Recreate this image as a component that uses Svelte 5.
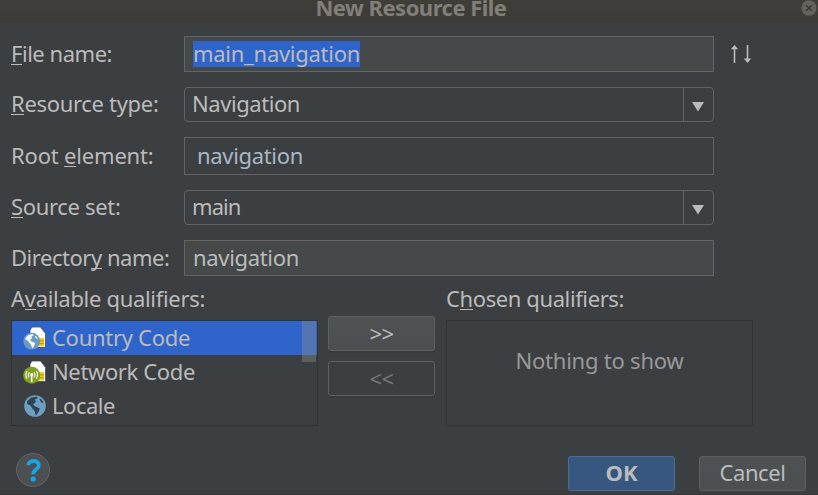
<script>
  // Spreads the letters so that a label takes up the given width.
  function fit(node, width) {
    const range = document.createRange();
    range.selectNodeContents(node);
    const natural = range.getBoundingClientRect().width;
    node.style.letterSpacing = `${(width - natural) / node.textContent.length}px`;
  }

  const fields = [
    { label: ['', 'F', 'ile name:'], lw: 101, kind: 'input filled', value: 'main_navigation', vw: 167, selected: true },
    { label: ['', 'R', 'esource type:'], lw: 147.5, kind: 'combo', value: 'Navigation', vw: 108 },
    { label: ['Root ', 'e', 'lement:'], lw: 142.5, kind: 'input editor', value: 'navigation', vw: 106 },
    { label: ['', 'S', 'ource set:'], lw: 109.5, kind: 'combo', value: 'main', vw: 48.5 },
    { label: ['Director', 'y', ' name:'], lw: 158.5, kind: 'input filled', value: 'navigation', vw: 106 }
  ];
  const qualifiers = [
    { name: 'Country Code', w: 138, icon: 'country' },
    { name: 'Network Code', w: 143, icon: 'network' },
    { name: 'Locale', w: 63, icon: 'locale' }
  ];
</script>

{#snippet mnemonic(parts, width)}
  <span class="text" use:fit={width}>{parts[0]}<span class="key">{parts[1]}</span>{parts[2]}</span>
{/snippet}

{#snippet sim()}
  <path d="M7 4L9 1H17.5L22.5 7.5V21.5H7Z" fill="#fff" stroke="#34496b" stroke-width=".8" />
  <path d="M15 12H21V20.5H13Z" fill="#f5cc16" />
  <path d="M15 14.8H21M15 17.7H21" stroke="#b68b08" fill="none" />
{/snippet}

{#snippet land()}
  <path d="M3 7L7 3L13 1.8L14 3.6L11 5L12.3 7.5L9.2 9.5L10.8 11.5L16.2 14L15 17.5L12 21.5L11 17L8.5 14L6.5 11L3.2 9.5Z" />
  <path d="M15.5 4L18 5L20 8.5L17.5 8Z" />
{/snippet}

<div class="dialog">
  <header>
    <span class="text title" use:fit={191}>New Resource File</span>
    <svg class="close" width="16" height="16" viewBox="0 0 16 16">
      <circle cx="8" cy="8" r="7.7" fill="#65625c" />
      <path d="M5.2 5.2L10.8 10.8M10.8 5.2L5.2 10.8" stroke="#3b3934" stroke-width="1.5" />
    </svg>
  </header>

  <main>
    <section class="form">
      {#each fields as f, i}
        <div class="row r{i}">
          <div class="label">{@render mnemonic(f.label, f.lw)}</div>
          <div class="field {f.kind}">
            <span class="text value" class:selected={f.selected} use:fit={f.vw}>{f.value}</span>
            {#if f.kind === 'combo'}
              <span class="arrow"><svg width="12" height="10" viewBox="0 0 12 10"><path d="M0 0H12L6 9.5Z" fill="#bbb" /></svg></span>
            {/if}
          </div>
          {#if i === 0}
            <svg class="sort" width="22" height="20" viewBox="0 0 22 20">
              <path d="M4.5 19V4M17.5 1V16" stroke="#bbb" stroke-width="1.6" />
              <path d="M4.5 1L8.2 5.2H.8ZM17.5 19L13.8 14.5H21.2Z" fill="#bbb" />
            </svg>
          {/if}
        </div>
      {/each}
    </section>

    <section class="qualifiers">
      <div class="column">
        <div class="heading">{@render mnemonic(['A', 'v', 'ailable qualifiers:'], 194)}</div>
        <div class="box">
          {#each qualifiers as q, i}
            <div class="item" class:active={i === 0}>
              <svg class="icon" width="24" height="24" viewBox="0 0 24 24">
                {#if q.icon === 'country'}
                  {@render sim()}
                  <circle cx="8.7" cy="15.2" r="8.4" fill="#6b9bc3" />
                  <g transform="translate(.2 6.7) scale(.74)" fill="#f4f8fb">{@render land()}</g>
                {:else if q.icon === 'network'}
                  {@render sim()}
                  <circle cx="8.7" cy="15.2" r="8.5" fill="#80a022" />
                  <g fill="none" stroke="#fff" stroke-width="1.1">
                    <path d="M6.2 12.2Q4.6 14.8 6.2 17.4M11.2 12.2Q12.8 14.8 11.2 17.4M4 11Q1.8 14.8 4 18.6M13.4 11Q15.6 14.8 13.4 18.6" />
                    <path d="M8.7 15V22" stroke-width="1.6" />
                  </g>
                  <circle cx="8.7" cy="14.6" r="1.6" fill="#fff" />
                {:else}
                  <circle cx="12" cy="12" r="10.8" fill="#6d9fc5" />
                  <g transform="translate(1 .7) scale(.98)" fill="#2f4352">{@render land()}</g>
                {/if}
              </svg>
              <span class="text lift" use:fit={q.w}>{q.name}</span>
            </div>
          {/each}
          <div class="thumb"></div>
        </div>
      </div>

      <div class="transfer">
        <button><span class="text lift" use:fit={24}>&gt;&gt;</span></button>
        <button class="disabled"><span class="text lift" use:fit={24}>&lt;&lt;</span></button>
      </div>

      <div class="column">
        <div class="heading">{@render mnemonic(['C', 'h', 'osen qualifiers:'], 178)}</div>
        <div class="box empty"><span class="text" use:fit={168}>Nothing to show</span></div>
      </div>
    </section>

    <footer>
      <div class="help">
        <svg width="34" height="34" viewBox="0 0 34 34">
          <circle cx="17" cy="17" r="16.5" fill="#4d5052" stroke="#626567" />
          <path d="M12.4 12.3C12.4 6.7 22.8 6.5 22.8 12.2C22.8 16.3 17.2 16.2 17.2 21.3" fill="none" stroke="#16a5e7" stroke-width="3.8" />
          <circle cx="17.2" cy="26" r="2.6" fill="#00adf5" />
        </svg>
      </div>
      <button class="primary"><span class="text" use:fit={32}>OK</span></button>
      <button><span class="text" use:fit={66}>Cancel</span></button>
    </footer>
  </main>
</div>

<style>
  .dialog {
    width: 818px;
    height: 495px;
    box-sizing: border-box;
    background: #3c3f41;
    color: #bbb;
    font: 22px/26px 'Noto Sans', 'Open Sans', sans-serif;
    border-bottom: 1px solid #353739;
  }
  .text { white-space: pre; }
  .key { border-bottom: 1px solid #bbb; display: inline-block; height: 25px; box-sizing: border-box; line-height: 26px; vertical-align: top; }
  header {
    height: 23px;
    display: flex;
    justify-content: center;
    position: relative;
    background: linear-gradient(#403e39, #3c3b37);
    color: #827f78;
    font-weight: 700;
    line-height: 14px;
  }
  .title { margin-left: 4px; }
  .close { position: absolute; right: 1px; top: 0; }
  main { padding: 13px 12px 0 11px; }
  .form { display: flex; flex-direction: column; }
  .row { display: flex; align-items: center; }
  .r0 { height: 36px; }
  .r1 { height: 35px; margin-top: 15px; }
  .r2 { height: 38px; margin-top: 15px; }
  .r3 { height: 35px; margin-top: 15px; }
  .r4 { height: 36px; margin-top: 15px; }
  .label { width: 173px; height: 26px; margin-bottom: 2px; }
  .r1 .label, .r3 .label { margin-bottom: 3px; }
  .field {
    width: 530px;
    height: 100%;
    box-sizing: border-box;
    border: 1px solid #646464;
    display: flex;
    align-items: center;
    padding-left: 8px;
  }
  .value { margin-bottom: 2px; }
  .filled { background: #45494a; }
  .editor { color: #a9b7c6; padding-left: 12px; }
  .combo { border-radius: 4px; padding-left: 7px; justify-content: space-between; }
  .combo .value { margin-bottom: 3px; }
  .selected { background: linear-gradient(#2f65ca, #2f65ca) 0 1px / 100% 26px no-repeat; padding: 1px 0 0; line-height: 24px; height: 27px; margin-bottom: 1px; }
  .arrow { width: 29px; height: 100%; border-left: 1px solid #646464; display: flex; align-items: center; justify-content: center; }
  .arrow svg { margin: 4px 2px 0 0; }
  .sort { margin-left: 16px; }
  .qualifiers { display: flex; margin-top: 9px; }
  .column { width: 307px; }
  .heading { height: 35px; }
  .box { height: 106px; box-sizing: border-box; border: 1px solid #323232; position: relative; overflow: hidden; }
  .item { height: 34px; display: flex; align-items: center; padding-left: 11px; gap: 5px; }
  .lift { margin-bottom: 2px; }
  .active { background: #2f65ca; }
  .thumb { position: absolute; top: 0; right: 1px; width: 14px; height: 41px; background: rgba(145, 145, 145, .38); }
  .empty { display: flex; justify-content: center; padding-top: 26px; color: #999; }
  .transfer { width: 107px; margin: 31px 11px 0 10px; display: flex; flex-direction: column; gap: 10px; }
  button {
    width: 107px;
    height: 35px;
    padding: 0;
    border: 1px solid #5e6162;
    border-radius: 3px;
    background: linear-gradient(#4e5254, #4b4f51);
    color: #bbb;
    font: inherit;
    display: flex;
    align-items: center;
    justify-content: center;
    box-shadow: 0 2px 0 #383a3b;
  }
  .disabled { background: #3c3f41; color: #777; }
  footer { display: flex; align-items: center; margin-top: 27px; gap: 24px; height: 41px; }
  footer button { box-shadow: none; }
  footer button .text { margin-bottom: 3px; }
  .help { height: 34px; margin: -8px auto 0 5px; }
  .help svg { display: block; }
  .primary { background: #365880; border-color: #4c708c; font-weight: 700; }
</style>
